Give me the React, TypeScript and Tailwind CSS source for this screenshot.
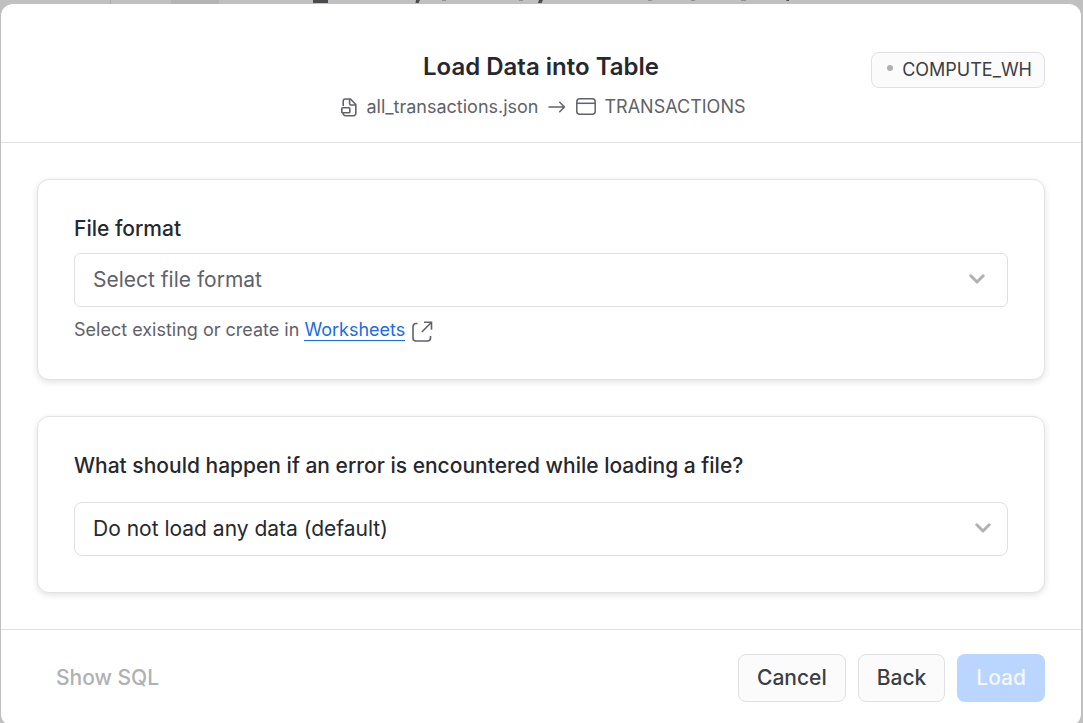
import type { ReactNode, SelectHTMLAttributes } from "react";

function FileIcon() {
  return (
    <svg width="16" height="19" viewBox="0 0 16 19" fill="none" stroke="currentColor" strokeWidth="1.6" strokeLinejoin="round" aria-hidden="true">
      <path d="M2.2 8V3.2A2.2 2.2 0 0 1 4.4 1H9.5L14.8 6.500V15.500A2.200 2.200 0 0 1 12.600 17.700H4.400A2.200 2.200 0 0 1 2.200 15.500V14.800" />
      <path d="M8.600 1.200V5.800A1.200 1.200 0 0 0 9.800 7H14.600" />
      <rect x="0.8" y="9.800" width="8" height="5" rx="0.8" />
    </svg>
  );
}

function ArrowIcon() {
  return (
    <svg width="18" height="12" viewBox="0 0 18 12" fill="none" stroke="currentColor" strokeWidth="1.5" strokeLinecap="round" strokeLinejoin="round" aria-hidden="true">
      <path d="M1 6H16.500M11.700 1.200L16.500 6L11.700 10.800" />
    </svg>
  );
}

function TableIcon() {
  return (
    <svg width="20" height="18" viewBox="0 0 20 18" fill="none" stroke="currentColor" strokeWidth="1.5" aria-hidden="true">
      <rect x="0.8" y="0.8" width="18.400" height="15.500" rx="3" />
      <path d="M1 5.300H19" />
    </svg>
  );
}

function ExternalIcon() {
  return (
    <svg width="21" height="21" viewBox="0 0 21 21" fill="none" stroke="currentColor" strokeWidth="1.600" aria-hidden="true">
      <path d="M5.500 2.500H4A3 3 0 0 0 1 5.500V17A3 3 0 0 0 4 20H15.500A3 3 0 0 0 18.500 17V15" />
      <path d="M12 1.300H19.500V8.800M19.300 1.500L9.800 11" />
    </svg>
  );
}

function Chevron() {
  return (
    <svg width="16" height="10" viewBox="0 0 16 10" fill="none" stroke="#afb1b5" strokeWidth="3" strokeLinecap="round" strokeLinejoin="round" aria-hidden="true">
      <path d="M1.800 1.800L8 8L14.200 1.800" />
    </svg>
  );
}

function Card({ children }: { children: ReactNode }) {
  return (
    <section className="flex flex-col rounded-xl border border-[#e2e3e5] bg-white p-9 shadow-[0_2px_6px_rgba(0,0,0,0.12)]">
      {children}
    </section>
  );
}

type FieldProps = SelectHTMLAttributes<HTMLSelectElement> & { tone: string; corner: string; inset: string };

function SelectField({ tone, corner, inset, children, ...rest }: FieldProps) {
  return (
    <div className="grid">
      <select
        {...rest}
        className={`col-start-1 row-start-1 h-[54px] w-full appearance-none border border-[#dfe0e3] bg-white px-[18px] text-[21px] ${tone} ${corner}`}
      >
        {children}
      </select>
      <span className={`pointer-events-none col-start-1 row-start-1 flex self-center justify-self-end pb-0.5 ${inset}`}>
        <Chevron />
      </span>
    </div>
  );
}

function Backdrop() {
  return (
    <svg className="h-1 w-full" aria-hidden="true">
      <rect x="110" width="1" height="4" fill="#acacac" />
      <rect x="171" width="48" height="4" fill="#b4b4b4" />
      <rect x="313" width="15" height="3" fill="#4b4a50" />
      <path d="M416 0H420L418.500 3H415.500ZM539 0H543L541.500 3H538ZM786 0H789V1H787Z" fill="#4b4a50" />
      <path d="M442 0H446V1H442ZM519 0H523V1H519ZM648 0H652V1H648ZM691 0H695V1H691ZM741 0H746V1H741Z" fill="#929294" />
    </svg>
  );
}

export default function App() {
  return (
    <div className="h-screen overflow-hidden bg-[#c0c0c0] font-['Inter',sans-serif] text-[#26282e]">
      <Backdrop />
      <main role="dialog" aria-labelledby="dialog-title" className="mr-0.5 ml-px rounded-xl bg-white">
        <header className="grid grid-cols-[1fr_auto_1fr] items-start border-b border-[#dfe0e3] px-9 pt-12 pb-[22px]">
          <div className="col-start-2 flex flex-col items-center gap-3">
            <h1 id="dialog-title" className="text-2xl leading-[30px] font-semibold">Load Data into Table</h1>
            <p className="flex h-[26px] items-center pl-1 text-lg text-[#5f6269]">
              <FileIcon />
              <span className="ml-2.5">all_transactions.json</span>
              <span className="mx-2.5"><ArrowIcon /></span>
              <TableIcon />
              <span className="ml-2">TRANSACTIONS</span>
            </p>
          </div>
          <button
            type="button"
            className="flex h-9 items-center justify-self-end rounded-lg border border-[#dfe0e3] bg-[#fbfbfb] pr-3 pl-[15px] text-lg text-[#3c3e44]"
          >
            <span className="mr-[9px] mb-1 size-1.5 rounded-full bg-[#aeb0b4]" />
            COMPUTE_WH
          </button>
        </header>

        <div className="flex flex-col gap-9 p-9">
          <Card>
            <label htmlFor="file-format" className="mb-[11px] text-[21px] leading-[26px] font-medium">File format</label>
            <SelectField id="file-format" defaultValue="" tone="text-[#5f6269]" corner="rounded-md" inset="mr-[23px]">
              <option value="">Select file format</option>
              <option value="json">JSON</option>
            </SelectField>
            <p className="mt-2.5 flex h-[26px] items-center text-lg text-[#5f6269]">
              <span>
                Select existing or create in{" "}
                <a href="#worksheets" className="border-b border-[#1a6ce7] text-[#1a6ce7]">Worksheets</a>
              </span>
              <span className="mt-0.5 ml-[7px]"><ExternalIcon /></span>
            </p>
          </Card>

          <Card>
            <label htmlFor="on-error" className="mb-[23px] text-[21px] leading-[26px] font-medium">
              What should happen if an error is encountered while loading a file?
            </label>
            <SelectField id="on-error" tone="text-[#26282e]" corner="rounded-lg" inset="mr-[17px]">
              <option>Do not load any data (default)</option>
            </SelectField>
          </Card>
        </div>

        <footer className="flex items-center gap-3 border-t border-[#dfe0e3] px-9 py-6 text-[21px] font-medium">
          <button type="button" disabled className="mr-auto h-12 px-[19px] text-[#afb1b5]">Show SQL</button>
          <button type="button" className="h-12 rounded-lg border border-[#dfe0e3] bg-[#fbfbfb] px-[18px] text-[#3c3e44]">Cancel</button>
          <button type="button" className="h-12 rounded-lg border border-[#dfe0e3] bg-[#fbfbfb] px-[18px] text-[#3c3e44]">Back</button>
          <button type="button" disabled className="h-12 rounded-lg bg-[#bad5ff] px-[19px] text-[#f4f8ff]">Load</button>
        </footer>
      </main>
    </div>
  );
}
